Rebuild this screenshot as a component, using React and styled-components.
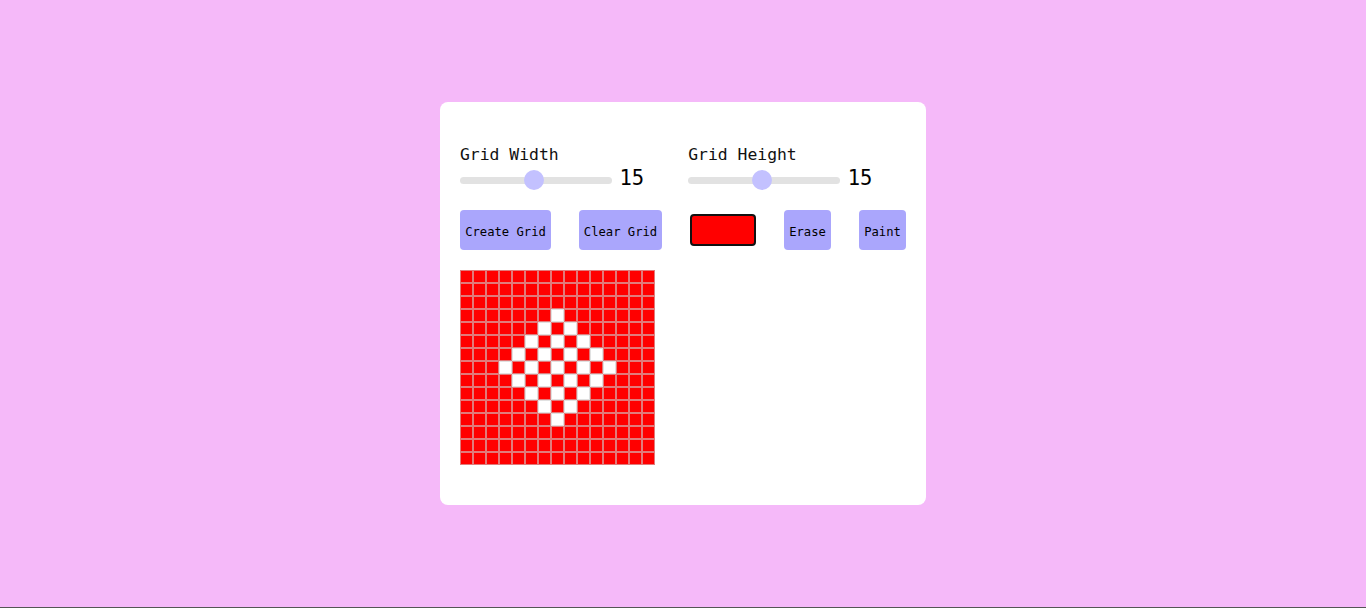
import React, { useState } from "react";
import styled, { createGlobalStyle } from "styled-components";

const GlobalStyle = createGlobalStyle`
  html, body {
    margin: 0;
    padding: 0;
    background: #f5b9f9;
  }
  * {
    box-sizing: border-box;
  }
`;

const Page = styled.div`
  height: 608px;
  display: flex;
  justify-content: center;
  align-items: flex-start;
  padding-top: 102px;
  font-family: "DejaVu Sans Mono", monospace;
  color: #111;
  border-bottom: 1px solid #555;
`;

const Card = styled.div`
  width: 486px;
  height: 403px;
  background: #fff;
  border-radius: 8px;
  padding: 42px 20px 40px;
  display: flex;
  flex-direction: column;
`;

const Controls = styled.div`
  display: flex;
  gap: 44px;
`;

const Group = styled.div`
  display: flex;
  flex-direction: column;
`;

const Label = styled.label`
  font-size: 16.4px;
  line-height: 21px;
  margin-bottom: 5px;
`;

const SliderRow = styled.div`
  display: flex;
  align-items: center;
  gap: 7.5px;
  height: 20px;
`;

const Range = styled.input`
  -webkit-appearance: none;
  appearance: none;
  width: 152px;
  height: 20px;
  margin: 0;
  background: transparent;

  &::-webkit-slider-runnable-track {
    height: 7px;
    border-radius: 4px;
    background: #e2e2e2;
  }
  &::-webkit-slider-thumb {
    -webkit-appearance: none;
    width: 20px;
    height: 20px;
    border-radius: 50%;
    background: #c3c1ff;
    margin-top: -6.5px;
  }
`;

const Value = styled.span`
  font-size: 20.5px;
  line-height: 20px;
  margin-bottom: 4px;
  color: #000;
`;

const Toolbar = styled.div`
  display: flex;
  justify-content: space-between;
  align-items: center;
  margin-top: 20px;
  height: 40px;
`;

const Button = styled.button`
  width: ${(p) => p.$w}px;
  height: 40px;
  padding: 3px 0 0;
  border: none;
  border-radius: 4px;
  background: #aaa6fc;
  font-family: "DejaVu Sans Mono", monospace;
  font-size: 12.2px;
  color: #000;
  cursor: pointer;
`;

const Swatch = styled.div`
  width: 66px;
  height: 32px;
  border: 2px solid #111;
  border-radius: 4px;
  background: ${(p) => p.$color};
`;

const Grid = styled.div`
  margin-top: 20px;
  display: grid;
  grid-template-columns: repeat(${(p) => p.$cols}, 13px);
  grid-auto-rows: 13px;
  width: max-content;
`;

const Cell = styled.div`
  border: 1px solid rgba(205, 205, 205, 0.6);
  background: ${(p) => (p.$on ? "#ff0000" : "#ffffff")};
`;

export default function App() {
  const [width, setWidth] = useState(15);
  const [height, setHeight] = useState(15);

  // red grid with a white checkered diamond painted in the middle
  const cells = [];
  for (let r = 0; r < 15; r++) {
    for (let c = 0; c < 15; c++) {
      const d = Math.abs(r - 7) + Math.abs(c - 7);
      const white = d <= 4 && (r + c) % 2 === 0;
      cells.push(<Cell key={`${r}-${c}`} $on={!white} />);
    }
  }

  return (
    <>
      <GlobalStyle />
      <Page>
        <Card>
          <Controls>
            <Group>
              <Label>Grid Width</Label>
              <SliderRow>
                <Range
                  type="range"
                  min="1"
                  max="30"
                  value={width}
                  onChange={(e) => setWidth(Number(e.target.value))}
                />
                <Value>{width}</Value>
              </SliderRow>
            </Group>
            <Group>
              <Label>Grid Height</Label>
              <SliderRow>
                <Range
                  type="range"
                  min="1"
                  max="30"
                  value={height}
                  onChange={(e) => setHeight(Number(e.target.value))}
                />
                <Value>{height}</Value>
              </SliderRow>
            </Group>
          </Controls>

          <Toolbar>
            <Button $w={91}>Create Grid</Button>
            <Button $w={83}>Clear Grid</Button>
            <Swatch $color="#ff0000" />
            <Button $w={47}>Erase</Button>
            <Button $w={47}>Paint</Button>
          </Toolbar>

          <Grid $cols={15}>{cells}</Grid>
        </Card>
      </Page>
    </>
  );
}
